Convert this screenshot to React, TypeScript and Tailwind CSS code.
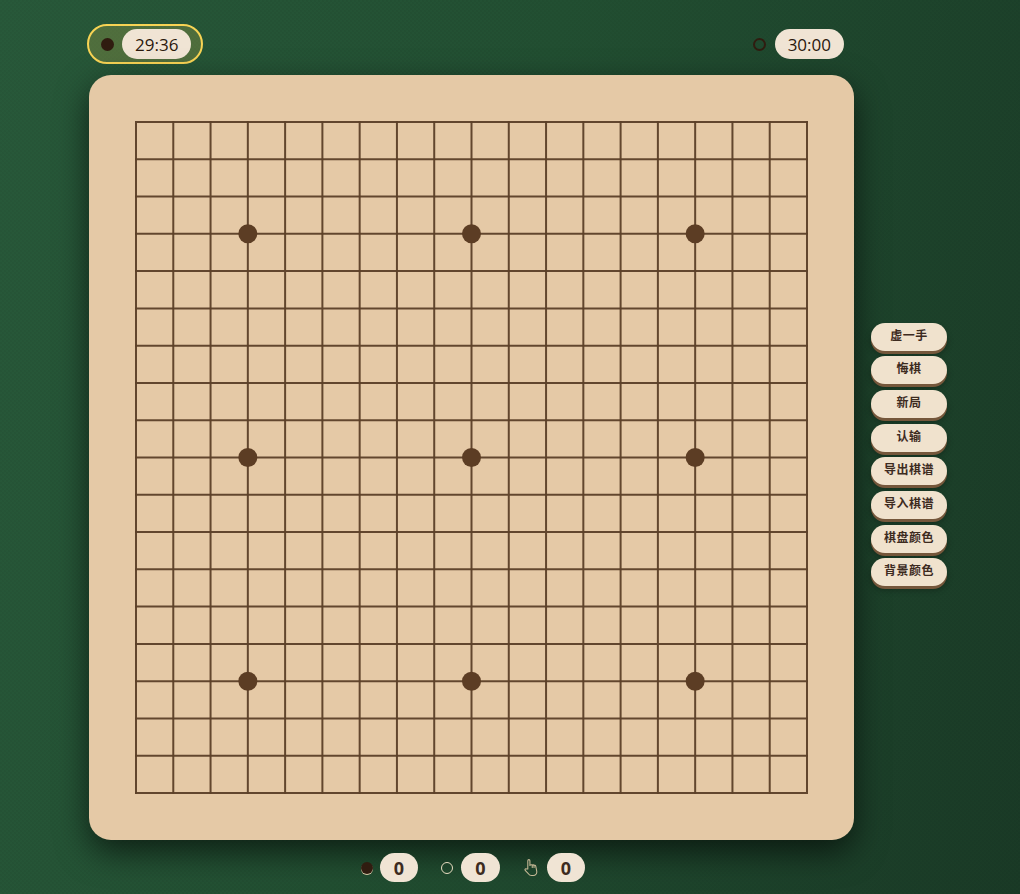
const lines = Array.from({ length: 19 }, (_, i) => 1 + i * (671 / 18))
const stars = [3, 9, 15]

const actions = ['虚一手', '悔棋', '新局', '认输', '导出棋谱', '导入棋谱', '棋盘颜色', '背景颜色']

function Board() {
  return (
    <svg width="673" height="673" viewBox="0 0 673 673" className="block">
      {lines.map((p) => (
        <g key={p} stroke="#5c4028" strokeWidth="2" opacity="0.95">
          <line x1={p} y1="0" x2={p} y2="673" />
          <line x1="0" y1={p} x2="673" y2={p} />
        </g>
      ))}
      {stars.map((r) =>
        stars.map((c) => <circle key={`${r}-${c}`} cx={lines[c]} cy={lines[r]} r="9.5" fill="#5c3d24" />),
      )}
    </svg>
  )
}

function HandIcon() {
  return (
    <svg width="17" height="19" viewBox="0 0 16 18" fill="none" strokeLinejoin="round" strokeLinecap="round">
      <path
        stroke="#c9bb98"
        strokeWidth="1"
        d="M4.500 10.500V2.600c0-1.400 2-1.400 2 0V7l.6-.4c.5-.4 1.200-.3 1.600.2.5-.5 1.300-.4 1.700.2.6-.4 1.400-.1 1.600.6l1 5c.3 2-1 4-3.400 4H8c-1.300 0-2.200-.6-3-1.700L2 11.800c-.7-1 .6-2.200 1.500-1.300z"
      />
      <path stroke="#c9bb98" strokeWidth="1" d="M8.700 6.800V9M10.400 7V9" />
    </svg>
  )
}

function Count({ children }: { children: string }) {
  return (
    <span className="flex h-[29px] w-[38.500px] items-center justify-center rounded-full bg-[#f0e4d4] text-[18px] font-bold leading-none text-[#3d2b1f]">
      {children}
    </span>
  )
}

export default function App() {
  return (
    <div className="flex h-[894px] w-full flex-col overflow-hidden pl-[87px] font-['Open_Sans','Noto_Sans_CJK_SC',sans-serif] [background:repeating-conic-gradient(rgba(0,0,0,0.03)_0_25%,transparent_0_50%)_0_0/4px_4px,linear-gradient(105deg,#28593a_0%,#224f32_45%,#1a3a26_100%)]">
      {/* Timers */}
      <div className="flex h-[75px] w-[767px] items-start justify-between pr-[10px] pt-[24px]">
        <div className="flex h-[40px] items-center gap-[8px] rounded-full border-2 border-[#f7d354] bg-[#f7d354]/20 pl-[12px] pr-[10px]">
          <span className="h-[13px] w-[13px] rounded-full bg-[#301c10]" />
          <span className="flex h-[30px] items-center rounded-full bg-[#f0e4d4] px-[13px] text-[17px] leading-none text-[#2a180c]">29:36</span>
        </div>
        <div className="flex h-[40px] items-center gap-[9px]">
          <span className="h-[13px] w-[13px] rounded-full border-2 border-[#301c10]" />
          <span className="flex h-[30px] items-center rounded-full bg-[#f0e4d4] px-[13px] text-[17px] leading-none text-[#2a180c]">30:00</span>
        </div>
      </div>

      {/* Board and actions */}
      <div className="flex items-center gap-[17px] pl-[2px]">
        <div className="rounded-[22px] bg-[#e5c9a6] p-[46px] shadow-[0_12px_32px_rgba(0,0,0,0.6)]">
          <Board />
        </div>
        <div className="mb-[6px] flex w-[76px] flex-col gap-[5.700px]">
          {actions.map((label) => (
            <button
              key={label}
              className="h-[28px] rounded-full bg-[#f0e2cd] pb-[2px] text-[12px] font-semibold leading-none tracking-[0.5px] text-[#3d2b1f] shadow-[0_3px_0_#75573b,0_4px_6px_rgba(0,0,0,0.3)]"
            >
              {label}
            </button>
          ))}
        </div>
      </div>

      {/* Captures */}
      <div className="flex w-[767px] items-center justify-center pl-[5px] pt-[13px]">
        <span className="mr-[7px] h-[12px] w-[12px] rounded-full bg-[#301c10] shadow-[0_1px_0_#d9c9a8]" />
        <Count>0</Count>
        <span className="ml-[23px] mr-[8px] h-[12px] w-[12px] rounded-full border border-[#e8dcc0]" />
        <Count>0</Count>
        <span className="ml-[23px] mr-[7px]">
          <HandIcon />
        </span>
        <Count>0</Count>
      </div>
    </div>
  )
}
